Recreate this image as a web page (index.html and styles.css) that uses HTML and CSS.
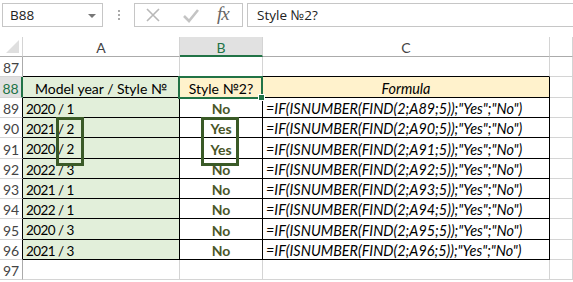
FILE: index.html
```html
<!DOCTYPE html>
<html>
<head>
<meta charset="utf-8">
<link rel="stylesheet" href="styles.css">
</head>
<body>
<div class="toolbar">
  <div class="namebox"><span class="name">B88</span><span class="caret"></span></div>
  <div class="grip"><i></i><i></i><i></i></div>
  <div class="fxbox">
    <svg class="ico-x" width="16" height="16" viewBox="0 0 16 16"><path d="M2 2 L14 14 M14 2 L2 14" stroke="#b8b8b8" stroke-width="1.6" fill="none"/></svg>
    <svg class="ico-ok" width="18" height="16" viewBox="0 0 18 16"><path d="M2 9 L7 14 L16 3" stroke="#c4c4c4" stroke-width="2.6" fill="none"/></svg>
    <span class="fx">fx</span>
  </div>
  <div class="formula">Style №2?</div>
</div>
<div class="sheetwrap">
  <div class="sheet">
    <div class="corner"><span class="tri"></span></div>
    <div class="colh">A</div>
    <div class="colh sel">B</div>
    <div class="colh">C</div>
    <div class="colh"></div>

    <div class="rowh">87</div>
    <div class="cell tb"></div><div class="cell tb"></div><div class="cell tb"></div><div class="cell"></div>

    <div class="rowh t selrow">88</div>
    <div class="cell t green center">Model year / Style №</div>
    <div class="cell t cream center">Style №2?</div>
    <div class="cell t cream center it">Formula</div>
    <div class="cell"></div>

    <div class="rowh t">89</div>
    <div class="cell t green num">2020 / 1</div>
    <div class="cell t center res">No</div>
    <div class="cell t it">=IF(ISNUMBER(FIND(2;A89;5));"Yes";"No")</div>
    <div class="cell"></div>

    <div class="rowh t">90</div>
    <div class="cell t green num">2021 / 2</div>
    <div class="cell t center res">Yes</div>
    <div class="cell t it">=IF(ISNUMBER(FIND(2;A90;5));"Yes";"No")</div>
    <div class="cell"></div>

    <div class="rowh t">91</div>
    <div class="cell t green num">2020 / 2</div>
    <div class="cell t center res">Yes</div>
    <div class="cell t it">=IF(ISNUMBER(FIND(2;A91;5));"Yes";"No")</div>
    <div class="cell"></div>

    <div class="rowh t">92</div>
    <div class="cell t green num">2022 / 3</div>
    <div class="cell t center res">No</div>
    <div class="cell t it">=IF(ISNUMBER(FIND(2;A92;5));"Yes";"No")</div>
    <div class="cell"></div>

    <div class="rowh t">93</div>
    <div class="cell t green num">2021 / 1</div>
    <div class="cell t center res">No</div>
    <div class="cell t it">=IF(ISNUMBER(FIND(2;A93;5));"Yes";"No")</div>
    <div class="cell"></div>

    <div class="rowh t">94</div>
    <div class="cell t green num">2022 / 1</div>
    <div class="cell t center res">No</div>
    <div class="cell t it">=IF(ISNUMBER(FIND(2;A94;5));"Yes";"No")</div>
    <div class="cell"></div>

    <div class="rowh t">95</div>
    <div class="cell t green num">2020 / 3</div>
    <div class="cell t center res">No</div>
    <div class="cell t it">=IF(ISNUMBER(FIND(2;A95;5));"Yes";"No")</div>
    <div class="cell"></div>

    <div class="rowh t">96</div>
    <div class="cell t green num">2021 / 3</div>
    <div class="cell t center res">No</div>
    <div class="cell t it">=IF(ISNUMBER(FIND(2;A96;5));"Yes";"No")</div>
    <div class="cell"></div>

    <div class="rowh">97</div>
    <div class="cell"></div><div class="cell"></div><div class="cell"></div><div class="cell"></div>
  </div>
  <div class="selbox"><span class="handle"></span></div>
  <div class="mark mark-a"></div>
  <div class="mark mark-b"></div>
</div>
</body>
</html>
```
FILE: styles.css
```css
html, body {
  margin: 0;
  padding: 0;
  background: #fff;
  width: 573px;
  height: 282px;
  overflow: hidden;
}
body {
  font-family: Lato, "Open Sans", sans-serif;
  color: #000;
}
.toolbar {
  display: flex;
  align-items: flex-start;
  height: 37px;
  box-sizing: border-box;
  padding: 3px 0 0 2px;
}
.namebox {
  width: 101px;
  height: 24px;
  box-sizing: border-box;
  border: 1px solid #c6c6c6;
  display: flex;
  align-items: center;
  justify-content: space-between;
  padding: 0 6px 0 7px;
}
.name {
  font-family: "Open Sans", sans-serif;
  font-size: 13.5px;
  color: #222;
}
.caret {
  width: 0;
  height: 0;
  border-left: 4px solid transparent;
  border-right: 4px solid transparent;
  border-top: 4px solid #777;
  margin-top: 1px;
}
.grip {
  width: 31px;
  height: 24px;
  display: flex;
  flex-direction: column;
  align-items: center;
  justify-content: center;
  gap: 2px;
}
.grip i {
  display: block;
  width: 2px;
  height: 2px;
  background: #aaa;
}
.fxbox {
  width: 109px;
  height: 24px;
  box-sizing: border-box;
  border: 1px solid #c6c6c6;
  display: flex;
  align-items: center;
  padding-left: 10px;
}
.ico-x { margin-right: 21px; }
.ico-ok { margin-right: 17px; }
.fx {
  font-family: "Liberation Serif", serif;
  font-style: italic;
  font-size: 19px;
  color: #666;
  letter-spacing: -1px;
  margin-top: -2px;
}
.formula {
  flex: 1;
  margin-left: 4px;
  margin-right: -2px;
  height: 24px;
  box-sizing: border-box;
  border: 1px solid #c6c6c6;
  padding-left: 9px;
  font-family: "Open Sans", sans-serif;
  font-size: 13.5px;
  line-height: 22px;
  color: #222;
}
.sheetwrap {
  position: relative;
}
.sheet {
  display: grid;
  grid-template-columns: 23px 157px 83px 287px 23px;
  grid-template-rows: 20px 20px 21px 20px 20px 21px 20px 20px 20px 21px 20px 20px;
  font-size: 14px;
}
.sheet > div {
  box-sizing: border-box;
  border-right: 1px solid #d4d4d4;
  border-bottom: 1px solid #d4d4d4;
  display: flex;
  align-items: center;
  white-space: nowrap;
  overflow: visible;
  padding-top: 2px;
}
.corner {
  position: relative;
  border-bottom-color: #ababab !important;
  border-right-color: #d4d4d4 !important;
}
.tri {
  position: absolute;
  right: 3px;
  bottom: 3px;
  width: 0;
  height: 0;
  border-left: 13px solid transparent;
  border-bottom: 13px solid #dfdfdf;
}
.colh {
  justify-content: center;
  color: #444;
  border-bottom-color: #ababab !important;
  border-right-color: #d4d4d4;
}
.colh.sel {
  background: #e1e1e1;
  color: #217346;
  border-bottom: 2px solid #217346 !important;
}
.rowh {
  justify-content: center;
  color: #444;
  font-size: 14px;
  border-right-color: #ababab !important;
}
.rowh.t { border-right-color: #000 !important; }
.rowh.selrow {
  color: #217346;
  background: #e1e1e1;
  border-right: 2px solid #217346 !important;
}
.cell { padding-left: 3px; }
.cell.tb { border-bottom-color: #000 !important; }
.cell.t {
  border-right-color: #000 !important;
  border-bottom-color: #000 !important;
}
.green { background: #e2efda; }
.cream { background: #fff2cc; }
.center { justify-content: center; padding-left: 0; }
.num { letter-spacing: -0.55px; font-size: 13.5px; }
.it { font-style: italic; font-size: 14.4px; }
.res {
  font-weight: bold;
  color: #4a5628;
}
.selbox {
  position: absolute;
  left: 178px;
  top: 39px;
  width: 85px;
  height: 23px;
  box-sizing: border-box;
  border: 2px solid #217346;
}
.handle {
  position: absolute;
  right: -4px;
  bottom: -4px;
  width: 5px;
  height: 5px;
  background: #217346;
  border: 1px solid #fff;
}
.mark {
  position: absolute;
  box-sizing: border-box;
  border: 3px solid #3a5a27;
}
.mark-a {
  left: 56px;
  top: 80px;
  width: 28px;
  height: 49px;
}
.mark-b {
  left: 201px;
  top: 80px;
  width: 38px;
  height: 49px;
}
```
